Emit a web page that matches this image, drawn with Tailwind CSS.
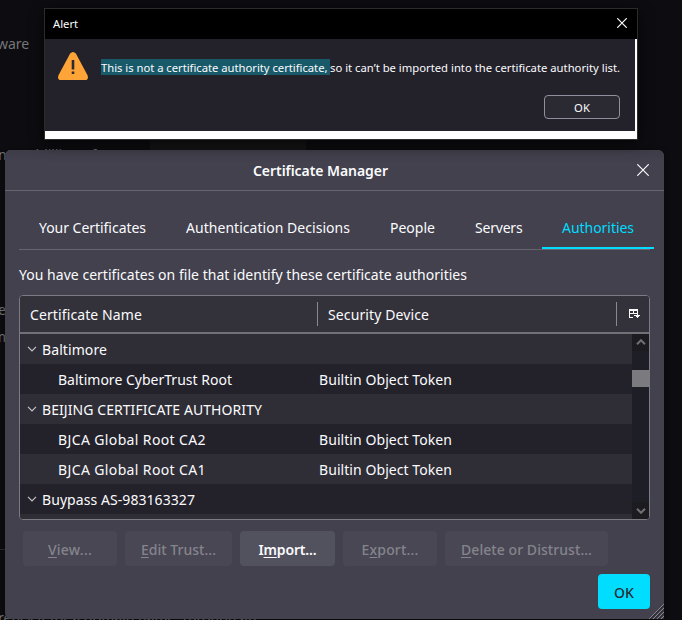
<!DOCTYPE html>
<html lang="en">
<head>
<meta charset="utf-8">
<title>Certificate Manager</title>
<script src="https://cdn.jsdelivr.net/npm/@tailwindcss/browser@4"></script>
</head>
<body class="relative h-[620px] w-[682px] overflow-hidden bg-[#0d0d11] font-['Noto_Sans',sans-serif] text-[14px] leading-5 text-[#fbfbfe]">

<!-- dimmed page behind the dialogs -->
<div class="absolute inset-0 overflow-hidden whitespace-nowrap text-[#76767a]">
  <div class="absolute top-[34px] left-[-3px]">ware</div>
  <div class="absolute top-[140px] left-[150px] h-4 w-[156px] bg-[#141416]"></div>
  <div class="absolute top-[145px] left-[-2px]">nt&nbsp;&nbsp; eddillion of</div>
  <div class="absolute top-[300px] left-[-2px]">e</div>
  <div class="absolute top-[327px] left-[-7px]">m</div>
  <div class="absolute top-[549px] left-0 h-px w-[5px] bg-[#2a2a2e]"></div>
  <div class="absolute top-[608px] left-[-2px]">rency it for a domain name, through an</div>
</div>

<!-- certificate manager -->
<main class="absolute top-[150px] left-[5px] flex h-[469px] w-[659px] flex-col rounded-t-[6px] rounded-bl-[6px] bg-[#42414d] shadow-[0_1px_5px_#00000080]">
  <header class="relative flex h-[41px] shrink-0 items-center justify-center rounded-t-[6px] border-b border-[#66656f] bg-linear-to-b from-[#3d3c47] to-[#42414d] to-30% pr-7">
    <h1 class="pt-px font-semibold tracking-[-0.058px]">Certificate Manager</h1>
    <svg class="absolute top-[14px] right-[15px] size-3" viewBox="0 0 12 12" fill="none" stroke="#fbfbfe" stroke-width="1.2"><path d="M.3.3 11.7 11.7M11.7.3.3 11.7"/></svg>
  </header>

  <nav class="mx-[14px] mt-4 flex h-[43px] shrink-0 border-b border-[#66656f] whitespace-nowrap">
    <div class="w-[147px] shrink-0 pt-[11px] pl-5 tracking-[-0.037px]">Your Certificates</div>
    <div class="w-[204px] shrink-0 pt-[11px] pl-5 tracking-[0.036px]">Authentication Decisions</div>
    <div class="w-[85px] shrink-0 pt-[11px] pl-5">People</div>
    <div class="w-[87px] shrink-0 pt-[11px] pl-5 tracking-[-0.2px]">Servers</div>
    <div class="h-[42px] w-[112px] shrink-0 border-b-2 border-[#00ddff] pt-[11px] pl-5 tracking-[-0.04px] text-[#00ddff]">Authorities</div>
  </nav>

  <p class="mt-[15px] ml-[14px] shrink-0 tracking-[0.028px]">You have certificates on file that identify these certificate authorities</p>

  <section class="mx-[14px] mt-[10px] flex h-[225px] shrink-0 flex-col overflow-hidden rounded-[4px] border border-[#7c7b84] bg-[#23222b]">
    <div class="flex h-[38px] shrink-0 items-center border-b-2 border-[#72717a] bg-[#33323a]">
      <div class="w-[297px] pt-0.5 pl-[10px] tracking-[0.108px]">Certificate Name</div>
      <div class="h-6 w-px bg-[#8a8990]"></div>
      <div class="w-[298px] pt-0.5 pl-[10px] tracking-[0.109px]">Security Device</div>
      <div class="h-6 w-px bg-[#8a8990]"></div>
      <svg class="ml-[12px] h-[10px] w-[11px]" viewBox="0 0 11 10" shape-rendering="crispEdges" fill="#fbfbfe"><path d="M0 0h9v2H0zM0 0h1v9H0zM4 0h1v5H4zM8 0h1v6H8zM0 4h9v1H0zM0 8h4v1H0zM5 6h6v1h-1v1H9v1H8V8H7V7H5z"/></svg>
    </div>
    <div class="flex min-h-0 flex-1">
      <div class="w-[612px] overflow-hidden leading-[30px] whitespace-nowrap [&_span]:relative [&_span]:top-px">
        <div class="flex h-[30px] items-center bg-[#2f2e36] pl-[7px]"><svg class="mr-[5px] h-[6px] w-[10px]" viewBox="0 0 10 6" fill="none" stroke="#c4c4c8" stroke-width="1.2"><path d="m1 .8 4 4 4-4"/></svg><span class="tracking-[0.089px]">Baltimore</span></div>
        <div class="flex h-[30px]"><span class="w-[299px] pl-[38px] tracking-[0.011px]">Baltimore CyberTrust Root</span><span class="tracking-[0.065px]">Builtin Object Token</span></div>
        <div class="flex h-[30px] items-center bg-[#2f2e36] pl-[7px]"><svg class="mr-[5px] h-[6px] w-[10px]" viewBox="0 0 10 6" fill="none" stroke="#c4c4c8" stroke-width="1.2"><path d="m1 .8 4 4 4-4"/></svg><span class="tracking-[0.068px]">BEIJING CERTIFICATE AUTHORITY</span></div>
        <div class="flex h-[30px]"><span class="w-[299px] pl-[38px] tracking-[0.375px]">BJCA Global Root CA2</span><span class="tracking-[0.065px]">Builtin Object Token</span></div>
        <div class="flex h-[30px] bg-[#2f2e36]"><span class="w-[299px] pl-[38px] tracking-[0.375px]">BJCA Global Root CA1</span><span class="tracking-[0.065px]">Builtin Object Token</span></div>
        <div class="flex h-[30px] items-center pl-[7px]"><svg class="mr-[5px] h-[6px] w-[10px]" viewBox="0 0 10 6" fill="none" stroke="#c4c4c8" stroke-width="1.2"><path d="m1 .8 4 4 4-4"/></svg><span class="tracking-[0.069px]">Buypass AS-983163327</span></div>
        <div class="h-[30px] bg-[#2f2e36]"></div>
      </div>
      <div class="flex flex-1 flex-col bg-[#1e1e26]">
        <div class="flex h-[17px] items-center justify-center bg-[#1b1b20]"><svg class="mb-px h-[6px] w-[10px]" viewBox="0 0 10 6" fill="none" stroke="#6f6f74" stroke-width="2"><path d="M1 5.2 5 1.2l4 4"/></svg></div>
        <div class="mt-[19px] h-[17px] bg-[#7b7a7e]"></div>
        <div class="mt-auto flex h-[17px] items-center justify-center bg-[#1b1b20]"><svg class="h-[6px] w-[10px]" viewBox="0 0 10 6" fill="none" stroke="#6f6f74" stroke-width="2"><path d="m1 .8 4 4 4-4"/></svg></div>
      </div>
    </div>
  </section>

  <div class="mt-[11px] ml-[18px] flex h-[35px] shrink-0 gap-2 font-medium text-[#85848d] [&>button]:rounded-[4px] [&>button]:bg-[#484753] [&>button]:pt-0.5 [&_u]:underline-offset-2">
    <button class="w-[94px] tracking-[0.241px]"><u>V</u>iew...</button>
    <button class="w-[107px] tracking-[0.022px]"><u>E</u>dit Trust...</button>
    <button class="w-[95px] bg-[#52515e]! font-semibold tracking-[-0.153px] text-[#fbfbfe]">I<u>m</u>port...</button>
    <button class="w-[94px] tracking-[0.184px]">E<u>x</u>port...</button>
    <button class="w-[163px] tracking-[0.061px]"><u>D</u>elete or Distrust...</button>
  </div>

  <button class="mt-2 mr-[14px] h-[35px] w-[52px] shrink-0 self-end rounded-[4px] bg-[#00ddff] pt-0.5 font-medium text-[#2b2a33]">OK</button>
  <svg class="absolute right-0 bottom-0 size-[15px]" viewBox="0 0 15 15" fill="none"><path d="M0 15 15 0M4 15 15 4M8 15l7-7M12 15l3-3" stroke="#86858c"/><path d="M1.5 15 15 1.5M5.5 15 15 5.5M9.5 15 15 9.5M13.5 15l1.5-1.5" stroke="#222127"/></svg>
</main>

<!-- alert window -->
<div class="absolute top-2 left-[44px] flex h-[132px] w-[594px] flex-col border border-[#2c2c2e] bg-white text-[11.25px] leading-4 whitespace-nowrap shadow-[0_3px_12px_#000000b0]">
  <div class="flex h-[30px] shrink-0 items-center justify-between bg-black pr-[10px] pl-2">
    <span>Alert</span>
    <svg class="mb-[2px] size-[10px]" viewBox="0 0 10 10" fill="none" stroke="#ffffff" stroke-width="1.2"><path d="m.2.2 9.6 9.6M9.8.2.2 9.8"/></svg>
  </div>
  <div class="mr-[2px] flex h-[92px] shrink-0 flex-col bg-[#23222b]">
    <div class="flex pt-[13px] pl-[13px]">
      <svg class="h-7 w-[30px] shrink-0" viewBox="0 0 30 28"><path d="M12 1.7Q15-1.6 18 1.7L29.5 23.2Q31 27.8 27 28H3Q-1 27.8.5 23.2Z" fill="#ffa436"/><path d="M13.7 8h2.6v9.5h-2.6zM13.7 19.5h2.6v2.5h-2.6z" fill="#2b2a33"/></svg>
      <p class="mt-[7px] ml-[13px] h-4"><span class="inline-block h-4 w-[229px] bg-[#195a6a] pt-px align-top tracking-[-0.02px] whitespace-pre">This is not a certificate authority certificate, </span><span class="inline-block pt-px align-top tracking-[0.01px]">so it can’t be imported into the certificate authority list.</span></p>
    </div>
    <button class="mt-[15px] mr-[15px] h-6 w-[76px] self-end rounded-[4px] border border-[#8f8f9d] bg-[#2b2a33] pt-px">OK</button>
  </div>
</div>
</body>
</html>
